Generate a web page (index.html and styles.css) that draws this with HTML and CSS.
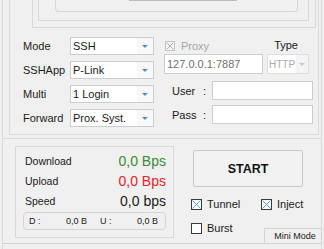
FILE: index.html
```html
<!DOCTYPE html>
<html>
<head>
<meta charset="utf-8">
<link rel="stylesheet" href="styles.css">
</head>
<body>
<div class="frame">
  <div class="upper">
    <div class="box1"><div class="box2"><div class="box3"><div class="stub"></div></div></div></div>
    <div class="controls">
      <div class="form">
        <span class="lbl">Mode</span>
        <div class="combo"><span class="val">SSH</span><span class="btn"><i class="arr"></i></span></div>
        <span class="lbl">SSHApp</span>
        <div class="combo"><span class="val">P-Link</span><span class="btn"><i class="arr"></i></span></div>
        <span class="lbl">Multi</span>
        <div class="combo"><span class="val">1 Login</span><span class="btn"><i class="arr"></i></span></div>
        <span class="lbl">Forward</span>
        <div class="combo"><span class="val">Prox. Syst.</span><span class="btn"><i class="arr"></i></span></div>
      </div>
      <div class="proxy">
        <div class="prow1">
          <span class="chk dis"><svg width="8" height="8" viewBox="0 0 8 8"><path d="M0.5 0.5L7.5 7.5M7.5 0.5L0.5 7.5" stroke="#b4b4b4" stroke-width="1"/></svg></span>
          <span class="plabel">Proxy</span>
          <span class="type">Type</span>
        </div>
        <div class="prow2">
          <div class="input addr">127.0.0.1:7887</div>
          <div class="combo sm dis"><span class="val">HTTP</span><span class="btn"><i class="arr"></i></span></div>
        </div>
        <div class="cred"><span class="clbl"><span>User</span><span>:</span></span><div class="input field"></div></div>
        <div class="cred"><span class="clbl"><span>Pass</span><span>:</span></span><div class="input field"></div></div>
      </div>
    </div>
  </div>
  <div class="lower">
    <div class="stats">
      <div class="srow"><span class="slbl">Download</span><span class="sval green">0,0 Bps</span></div>
      <div class="srow"><span class="slbl">Upload</span><span class="sval red">0,0 Bps</span></div>
      <div class="srow"><span class="slbl">Speed</span><span class="sval">0,0 bps</span></div>
      <div class="totals">
        <div class="half"><span>D :</span><span>0,0 B</span></div>
        <div class="half"><span>U :</span><span>0,0 B</span></div>
      </div>
    </div>
    <div class="actions">
      <button class="start">START</button>
      <div class="crow">
        <span class="opt w70"><span class="chk"><svg width="9" height="9" viewBox="0 0 9 9"><path d="M0.5 0.5L8.5 8.5M8.5 0.5L0.5 8.5" stroke="#5aa3d8" stroke-width="1"/></svg></span>Tunnel</span>
        <span class="opt"><span class="chk"><svg width="9" height="9" viewBox="0 0 9 9"><path d="M0.5 0.5L8.5 8.5M8.5 0.5L0.5 8.5" stroke="#5aa3d8" stroke-width="1"/></svg></span>Inject</span>
      </div>
      <div class="crow">
        <span class="opt"><span class="chk"></span>Burst</span>
      </div>
    </div>
    <div class="mini">Mini Mode</div>
  </div>
</div>
</body>
</html>
```

FILE: styles.css
```css
* { box-sizing: border-box; }
html, body { margin: 0; padding: 0; }
body {
  background: #f0f0f0;
  width: 324px;
  height: 249px;
  overflow: hidden;
  font-family: "Liberation Sans", Arial, sans-serif;
  font-size: 11px;
  color: #1a1a1a;
}
.frame {
  margin-left: 2px;
  width: 320px;
  height: 249px;
  border-left: 1px solid #dadada;
  border-right: 1px solid #dadada;
}
.upper {
  margin-left: 6px;
  margin-right: 2px;
  height: 135px;
  border: 1px solid #dadada;
  border-top: none;
}
.box1 {
  margin-left: 22px;
  margin-right: 2px;
  height: 28px;
  border: 1px solid #d8d8d8;
  border-top: none;
}
.box2 {
  margin-left: 5px;
  margin-right: 6px;
  height: 21px;
  border: 1px solid #d8d8d8;
  border-top: none;
}
.box3 {
  margin-left: 16px;
  margin-right: 10px;
  height: 12px;
  border: 1px solid #d6d6d6;
  border-top: none;
  border-radius: 0 0 4px 4px;
}
.stub {
  margin-left: 73px;
  width: 108px;
  height: 1px;
  background: #bcbcbc;
}
.controls {
  display: flex;
  padding-top: 9px;
}
.form {
  margin-left: 13px;
  display: grid;
  grid-template-columns: 47px 84px;
  grid-auto-rows: 18px;
  row-gap: 6px;
  align-items: center;
}
.combo {
  height: 18px;
  background: #fff;
  border: 1px solid #cdcdcd;
  display: flex;
  align-items: center;
}
.combo .val {
  flex: 1;
  padding-left: 2px;
  white-space: nowrap;
  overflow: hidden;
}
.combo .btn {
  width: 16px;
  height: 16px;
  display: flex;
  align-items: center;
  justify-content: center;
  background: #f8f8f8;
}
.arr {
  display: block;
  width: 0;
  height: 0;
  border-left: 3px solid transparent;
  border-right: 3px solid transparent;
  border-top: 3px solid #5a8fc4;
}
.proxy {
  margin-left: 10px;
  margin-top: 1px;
}
.prow1 {
  height: 16px;
  display: flex;
  align-items: center;
}
.chk {
  width: 10px;
  height: 10px;
  border: 1px solid #404040;
  background: #fff;
  display: flex;
  align-items: center;
  justify-content: center;
  flex: none;
}
.chk.dis {
  margin-left: 1px;
  border-color: #c6c6c6;
  background: #f4f4f4;
}
.plabel {
  margin-left: 6px;
  color: #a6a6a6;
}
.type {
  margin-left: 65px;
  margin-top: -2px;
}
.prow2 {
  display: flex;
  gap: 4px;
  height: 20px;
}
.input {
  background: #fff;
  border: 1px solid #cdcdcd;
}
.addr {
  width: 99px;
  height: 20px;
  padding-left: 2px;
  line-height: 18px;
  color: #6f6f6f;
}
.combo.sm {
  width: 42px;
  height: 20px;
}
.combo.dis {
  border-color: #dedede;
}
.combo.dis .val {
  color: #ababab;
  font-size: 10px;
  padding-left: 1px;
  overflow: visible;
}
.combo.dis .btn {
  width: 12px;
  height: 18px;
  background: #f4f4f4;
}
.combo.dis .arr {
  border-top-color: #c8c8c8;
}
.cred {
  display: flex;
  align-items: center;
  margin-top: 7px;
}
.cred + .cred {
  margin-top: 5px;
}
.clbl {
  margin-left: 8px;
  width: 34px;
  display: flex;
  justify-content: space-between;
}
.field {
  margin-left: 6px;
  width: 101px;
  height: 19px;
}
.lower {
  position: relative;
  margin-top: 3px;
  height: 106px;
  border-top: 1px solid #dadada;
  border-bottom: 1px solid #d2d2d2;
  display: flex;
  align-items: flex-start;
}
.stats {
  margin-left: 12px;
  margin-top: 7px;
  width: 159px;
  height: 92px;
  border: 1px solid #d8d8d8;
  padding: 4px 7px 0 9px;
}
.srow {
  height: 20px;
  display: flex;
  align-items: center;
  justify-content: space-between;
}
.slbl {
  font-size: 10.5px;
}
.sval {
  font-size: 14px;
}
.green { color: #3b8a35; }
.red { color: #e3232b; }
.totals {
  margin-top: 1px;
  margin-left: -2px;
  width: 143px;
  height: 18px;
  border: 1px solid #d4d4d4;
  border-radius: 4px;
  display: flex;
  align-items: center;
  padding-left: 5px;
  gap: 13px;
  font-size: 9px;
}
.half {
  width: 58px;
  display: flex;
  justify-content: space-between;
}
.actions {
  margin-left: 17px;
  margin-top: 11px;
}
.start {
  display: block;
  margin-left: 2px;
  width: 110px;
  height: 37px;
  background: #f2f2f2;
  border: 1px solid #c9c9c9;
  border-radius: 2px;
  font-family: "Liberation Sans", Arial, sans-serif;
  font-size: 12.5px;
  font-weight: bold;
  color: #111;
  padding: 0;
}
.crow {
  display: flex;
  height: 14px;
  align-items: center;
  margin-top: 10px;
}
.opt {
  display: flex;
  align-items: center;
  gap: 5px;
}
.opt .chk {
  width: 11px;
  height: 11px;
  border-color: #3a3a3a;
}
.w70 { width: 70px; }
.mini {
  position: absolute;
  right: -1px;
  bottom: -1px;
  width: 58px;
  height: 16px;
  border: 1px solid #d2d2d2;
  background: #f0f0f0;
  font-size: 9px;
  text-align: center;
  line-height: 15px;
  padding-left: 4px;
}
```
